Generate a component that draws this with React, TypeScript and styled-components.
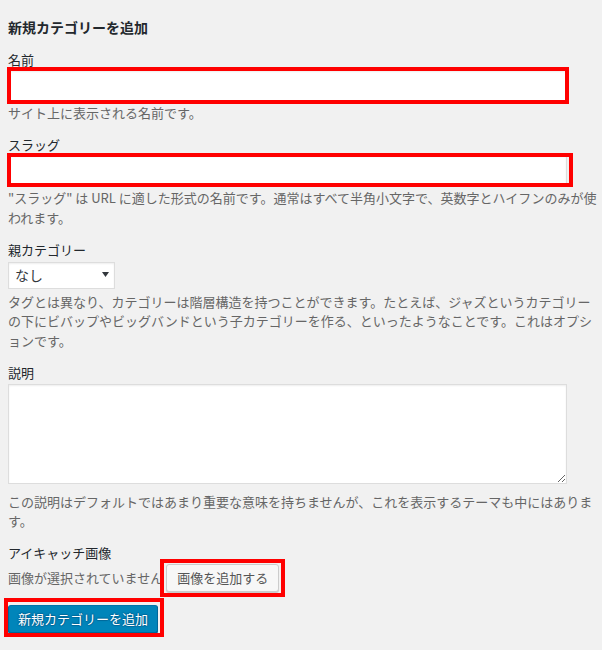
import * as React from 'react';
import styled, { createGlobalStyle } from 'styled-components';

const GlobalStyle = createGlobalStyle`
  body {
    margin: 0;
    background: #f1f1f1;
    font-family: 'Noto Sans CJK JP', 'Noto Sans', sans-serif;
    font-size: 13px;
    color: #444;
  }
`;

type Inset = { top: number; right: number; bottom: number; left: number };

const Ring: React.FC<{ inset: Inset }> = ({ inset }) => (
  <RingBox
    style={{
      top: inset.top,
      right: inset.right,
      bottom: inset.bottom,
      left: inset.left,
    }}
  />
);

const ChevronDown: React.FC = () => (
  <svg width="7" height="5" viewBox="0 0 7 5" aria-hidden="true">
    <path d="M0 0h7L3.5 5z" fill="#32373c" />
  </svg>
);

export default function App() {
  return (
    <>
      <GlobalStyle />
      <FormWrap>
        <Heading>新規カテゴリーを追加</Heading>

        <Field>
          <Label htmlFor="tag-name">名前</Label>
          <RingWrap>
            <TextInput id="tag-name" type="text" />
            <Ring inset={{ top: -3, right: -2, bottom: -2, left: -1 }} />
          </RingWrap>
          <Help>サイト上に表示される名前です。</Help>
        </Field>

        <Field>
          <Label htmlFor="tag-slug">スラッグ</Label>
          <RingWrap>
            <TextInput id="tag-slug" type="text" />
            <Ring inset={{ top: -2, right: -6, bottom: 0, left: -1 }} />
          </RingWrap>
          <Help>
            "スラッグ" は URL に適した形式の名前です。通常はすべて半角小文字で、英数字とハイフンのみが使われます。
          </Help>
        </Field>

        <Field>
          <Label htmlFor="parent">親カテゴリー</Label>
          <SelectWrap>
            <Select id="parent" defaultValue="-1">
              <option value="-1">なし</option>
            </Select>
            <Arrow>
              <ChevronDown />
            </Arrow>
          </SelectWrap>
          <Help $gap={3}>
            タグとは異なり、カテゴリーは階層構造を持つことができます。たとえば、ジャズというカテゴリーの下にビバップやビッグバンドという子カテゴリーを作る、といったようなことです。これはオプションです。
          </Help>
        </Field>

        <Field>
          <Label htmlFor="tag-description">説明</Label>
          <TextArea id="tag-description" rows={5} />
          <Help $gap={0}>
            この説明はデフォルトではあまり重要な意味を持ちませんが、これを表示するテーマも中にはあります。
          </Help>
        </Field>

        <Field>
          <Label as="div">アイキャッチ画像</Label>
          <ImageRow>
            <span>画像が選択されていません</span>
            <RingWrap $inline>
              <SecondaryButton type="button">画像を追加する</SecondaryButton>
              <Ring inset={{ top: -5, right: -6, bottom: -5, left: -6 }} />
            </RingWrap>
          </ImageRow>
        </Field>

        <Submit>
          <RingWrap $inline>
            <PrimaryButton type="submit">新規カテゴリーを追加</PrimaryButton>
            <Ring inset={{ top: -7, right: -6, bottom: -4, left: -4 }} />
          </RingWrap>
        </Submit>
      </FormWrap>
    </>
  );
}

const FormWrap = styled.form`
  padding: 17px 0 12px 8px;
`;

const Heading = styled.h2`
  margin: 0 0 13px;
  font-size: 14px;
  font-weight: 700;
  line-height: 20px;
  color: #23282d;
`;

const Field = styled.div`
  margin-bottom: 12.5px;
`;

const Label = styled.label`
  display: block;
  font-size: 13px;
  line-height: 19.5px;
  color: #23282d;
`;

const Help = styled.p<{ $gap?: number }>`
  margin: ${({ $gap }) => $gap ?? 1.5}px 0 0;
  font-size: 13px;
  line-height: 19.5px;
  color: #666;
`;

const RingWrap = styled.div<{ $inline?: boolean }>`
  position: relative;
  display: ${({ $inline }) => ($inline ? 'inline-block' : 'block')};
  width: ${({ $inline }) => ($inline ? 'auto' : '559px')};
`;

const RingBox = styled.span`
  position: absolute;
  border: 4px solid #ff0000;
  pointer-events: none;
`;

const TextInput = styled.input`
  display: block;
  box-sizing: border-box;
  width: 559px;
  height: 32px;
  margin: 0;
  padding: 3px 5px;
  border: 1px solid #ddd;
  background: #fff;
  box-shadow: inset 0 1px 2px rgba(0, 0, 0, 0.07);
  font: inherit;
  color: #32373c;
  outline: none;
`;

const SelectWrap = styled.div`
  position: relative;
  width: 107px;
  margin-top: 2.5px;
`;

const Select = styled.select`
  display: block;
  box-sizing: border-box;
  width: 107px;
  height: 27px;
  margin: 0;
  padding: 0 20px 0 6px;
  border: 1px solid #ddd;
  background: #fff;
  box-shadow: inset 0 1px 2px rgba(0, 0, 0, 0.07);
  appearance: none;
  font-family: inherit;
  font-size: 14px;
  color: #32373c;
`;

const Arrow = styled.span`
  position: absolute;
  top: 10px;
  right: 6px;
  display: flex;
  pointer-events: none;
`;

const TextArea = styled.textarea`
  display: block;
  box-sizing: border-box;
  width: 559px;
  height: 100px;
  margin: 1.5px 0 8px;
  padding: 2px 6px;
  border: 1px solid #ddd;
  background: #fff;
  box-shadow: inset 0 1px 2px rgba(0, 0, 0, 0.07);
  font: inherit;
  color: #32373c;
  resize: vertical;
`;

const ImageRow = styled.div`
  display: flex;
  align-items: center;
  gap: 3px;
  margin-top: 1px;
  line-height: 19.5px;
  color: #666;
`;

const Button = styled.button`
  box-sizing: border-box;
  height: 28px;
  margin: 0;
  border-radius: 3px;
  border: 1px solid;
  font-family: inherit;
  font-size: 13px;
  line-height: 26px;
  white-space: nowrap;
  cursor: pointer;
`;

const SecondaryButton = styled(Button)`
  display: block;
  padding: 0 10px;
  background: #f7f7f7;
  border-color: #ccc;
  box-shadow: 0 1px 0 #ccc;
  color: #555;
`;

const PrimaryButton = styled(Button)`
  display: block;
  padding: 0 9px;
  background: #0085ba;
  border-color: #0073aa #006799 #006799;
  box-shadow: 0 1px 0 #006799;
  color: #fff;
  text-shadow: 0 -1px 1px #006799, 1px 0 1px #006799, 0 1px 1px #006799,
    -1px 0 1px #006799;
`;

const Submit = styled.div`
  margin-top: 13px;
`;
